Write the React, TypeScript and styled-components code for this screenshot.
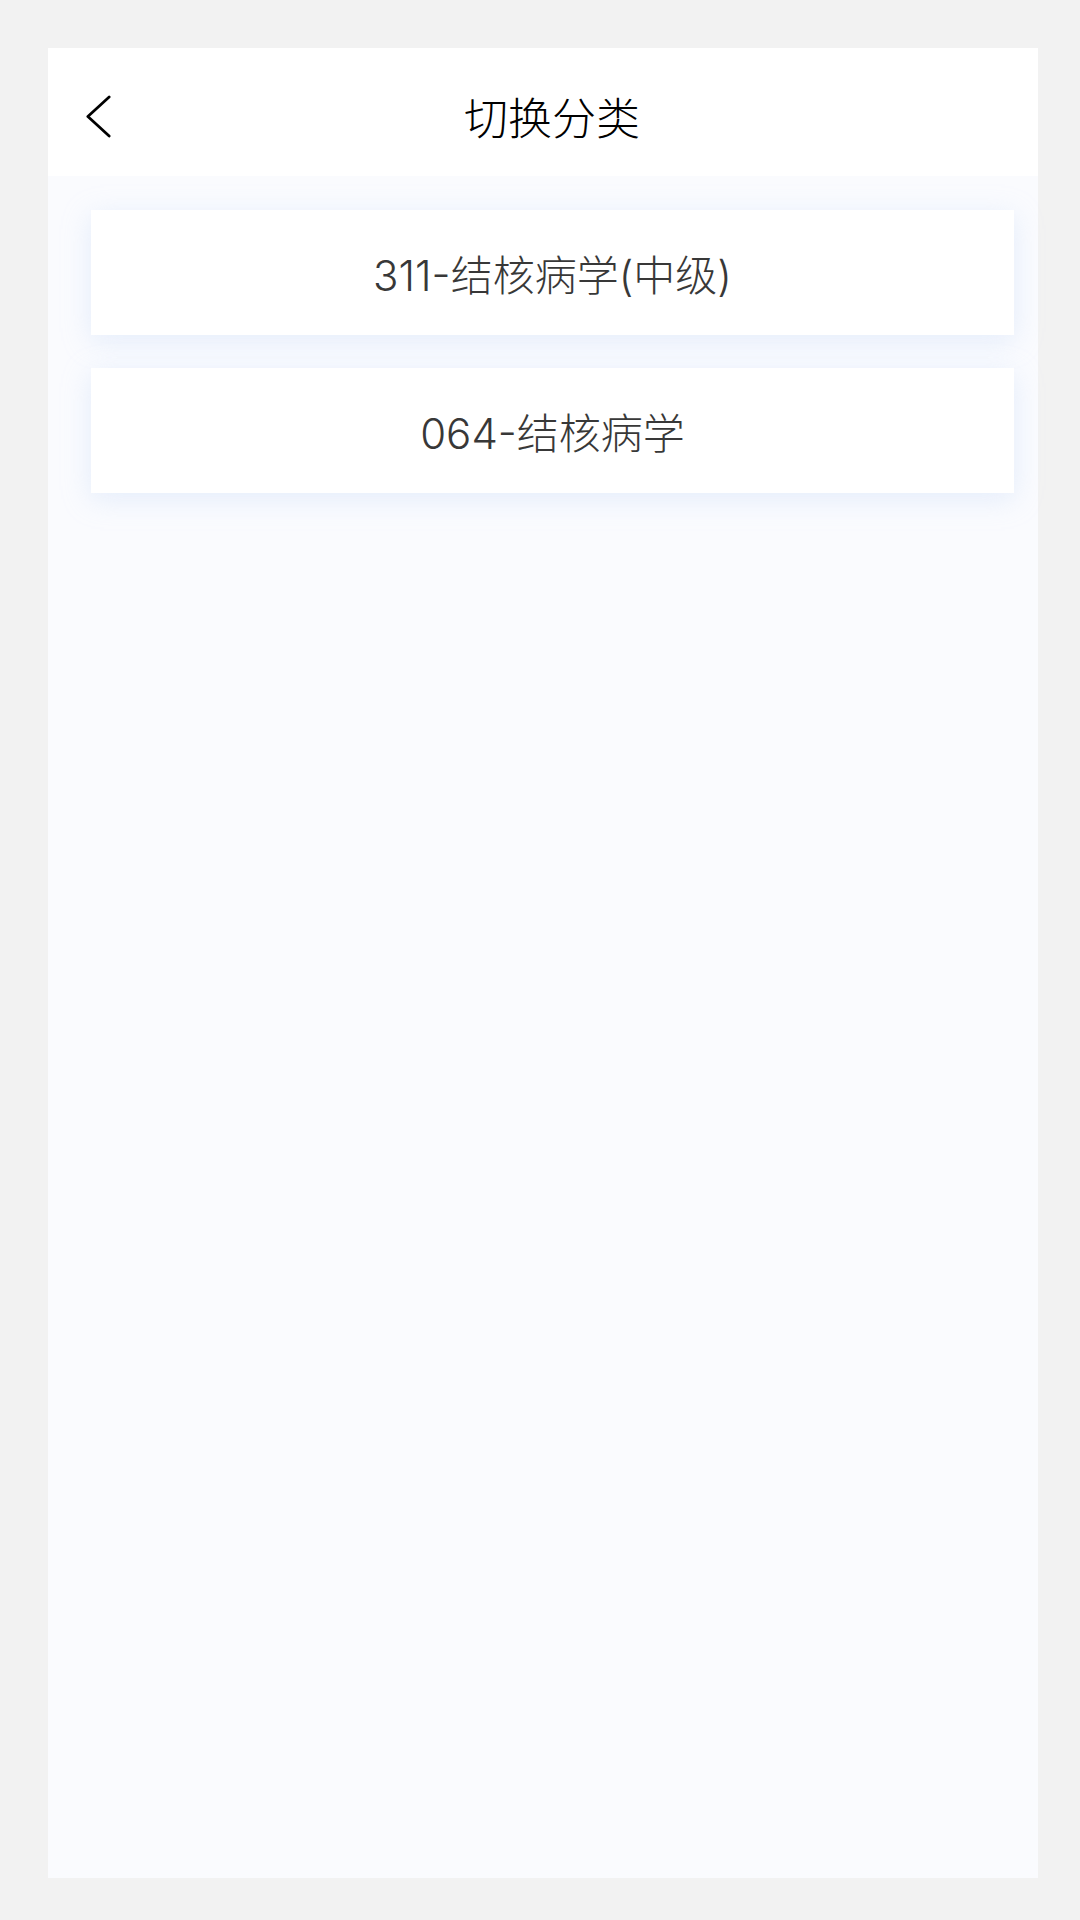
import React from "react";
import styled, { createGlobalStyle } from "styled-components";

const Global = createGlobalStyle`
  html, body {
    margin: 0;
    padding: 0;
    background: #f2f2f2;
    font-family: "Inter", "Noto Sans CJK SC", sans-serif;
  }
  * { box-sizing: border-box; }
`;

const Outer = styled.div`
  padding: 48px 42px 42px 48px;
  background: #f2f2f2;
`;

const Screen = styled.div`
  height: 1830px;
  display: flex;
  flex-direction: column;
  background: #fafbfe;
`;

const Header = styled.header`
  height: 128px;
  flex: none;
  display: flex;
  align-items: center;
  padding: 8px 45px 0 38px;
  background: #ffffff;
`;

const BackButton = styled.button`
  width: 25px;
  height: 45px;
  padding: 0;
  border: none;
  background: transparent;
  display: flex;
  align-items: center;
  justify-content: center;
  cursor: pointer;
`;

const Title = styled.h1`
  flex: 1;
  margin: 0;
  text-align: center;
  font-size: 44px;
  font-weight: 300;
  color: #000000;
  line-height: 1;
  font-family: "Noto Sans CJK SC", sans-serif;
`;

const List = styled.div`
  display: flex;
  flex-direction: column;
  gap: 33px;
  padding: 34px 24px 0 43px;
`;

const Item = styled.div`
  height: 125px;
  background: #ffffff;
  display: flex;
  align-items: center;
  justify-content: center;
  font-family: "Inter", "Noto Sans CJK SC", sans-serif;
  font-size: 42px;
  font-weight: 300;
  color: #383838;
  box-shadow: 0 6px 26px rgba(190, 212, 245, 0.35);
  cursor: pointer;
`;

const items = ["311-结核病学(中级)", "064-结核病学"];

export default function App() {
  return (
    <>
      <Global />
      <Outer>
        <Screen>
          <Header>
            <BackButton aria-label="返回">
              <svg width="27" height="45" viewBox="0 0 27 45" fill="none">
                <path
                  d="M25 1.5 L2 22.5 L25 43.5"
                  stroke="#000"
                  strokeWidth="3"
                  strokeLinecap="round"
                  strokeLinejoin="round"
                />
              </svg>
            </BackButton>
            <Title>切换分类</Title>
          </Header>
          <List>
            {items.map((t) => (
              <Item key={t}>{t}</Item>
            ))}
          </List>
        </Screen>
      </Outer>
    </>
  );
}
